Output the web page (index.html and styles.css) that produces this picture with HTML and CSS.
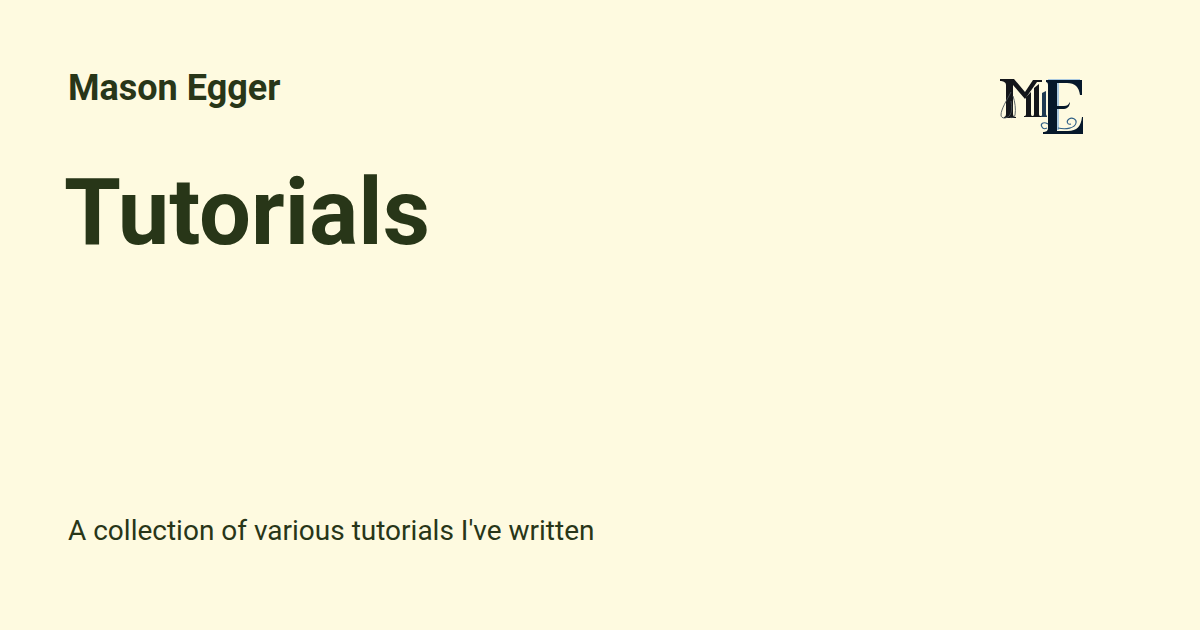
FILE: index.html
```html
<!DOCTYPE html>
<html lang="en">
<head>
    <meta charset="UTF-8">
    <meta name="viewport" content="width=device-width, initial-scale=1.0">
    <title>Tutorials</title>
    <link rel="stylesheet" href="styles.css">
</head>
<body>
    <div class="card">
        <div class="card-top">
            <div class="card-text">
                <div class="site-name">Mason Egger</div>
                <h1 class="page-title">Tutorials</h1>
            </div>
            <!-- Monogram logo -->
            <svg class="logo" width="92" height="64" viewBox="0 0 92 64" role="img" aria-label="Logo">
                <!-- blue shadow behind the E -->
                <path fill="#a9c8e0" d="M52 5H84V9H63V56H60V9H52Z"/>
                <!-- M: left stem and heavy diagonal -->
                <path fill="#14161a" d="M4 5H18L29 18L37 6H46V8H41L29 25L17 11V40C17 42 18 43 20 43V44H8V43C9 43 10 42 10 40V11C10 8 7 7 4 7Z"/>
                <!-- M: small inner stems -->
                <path fill="#14161a" d="M30 23L35 18V40C35 42 36 42 37 42V43H28V42C29 42 30 42 30 40Z"/>
                <path fill="#14161a" d="M38 14L43 10V40C43 42 44 42 45 42V43H36V42C37 42 38 42 38 40Z"/>
                <path fill="#1f3a52" d="M46 19L50 17V40C50 41 51 42 51 42V43H45V42C46 42 46 41 46 40Z"/>
                <!-- thin swashes on the M -->
                <g fill="none" stroke="#4a5258" stroke-width="0.9">
                    <path d="M15 18C11 26 5 35 5 41C5 45 11 45 14 41C16 38 16 33 15 27"/>
                    <path d="M17 22C19 28 20 35 19 41C18 44 15 44 14 43"/>
                </g>
                <!-- E -->
                <path fill="#06182b" d="M50 6H86V21H84C83 13 79 9 71 9H61V32H68C71 32 72 31 74 28C74 31 72 35 68 35H61V57H72C81 57 85 52 86 43H87L87 60H47V58C50 58 52 57 52 54V11C52 9 51 8 50 8Z"/>
                <!-- swirl on the E -->
                <g fill="none" stroke="#2f5f86" stroke-width="1.1">
                    <path d="M62 54C70 56 79 54 80 49C81 45 76 43 73 45C70 47 71 51 75 50"/>
                    <path d="M52 50C47 47 44 50 46 53C47 55 49 55 51 54"/>
                </g>
            </svg>
        </div>
        <p class="page-desc">A collection of various tutorials I've written</p>
    </div>
</body>
</html>
```

FILE: styles.css
```css
body {
    margin: 0;
    background-color: #fefae0;
    color: #283618;
    font-family: Roboto, sans-serif;
}
.card {
    width: 1200px;
    height: 630px;
    box-sizing: border-box;
    padding: 68px 112px 68px 65px;
    display: flex;
    flex-direction: column;
    justify-content: space-between;
}
.card-top {
    display: flex;
    justify-content: space-between;
    align-items: flex-start;
}
.site-name {
    font-size: 36px;
    font-weight: 700;
    line-height: 40px;
    margin-left: 3px;
}
.page-title {
    font-size: 92px;
    font-weight: 700;
    line-height: 100px;
    margin: 55px 0 0 -1px;
}
.logo {
    margin-top: 6px;
}
.page-desc {
    font-size: 28px;
    line-height: 32px;
    margin: 0 0 15px 3px;
}
```
